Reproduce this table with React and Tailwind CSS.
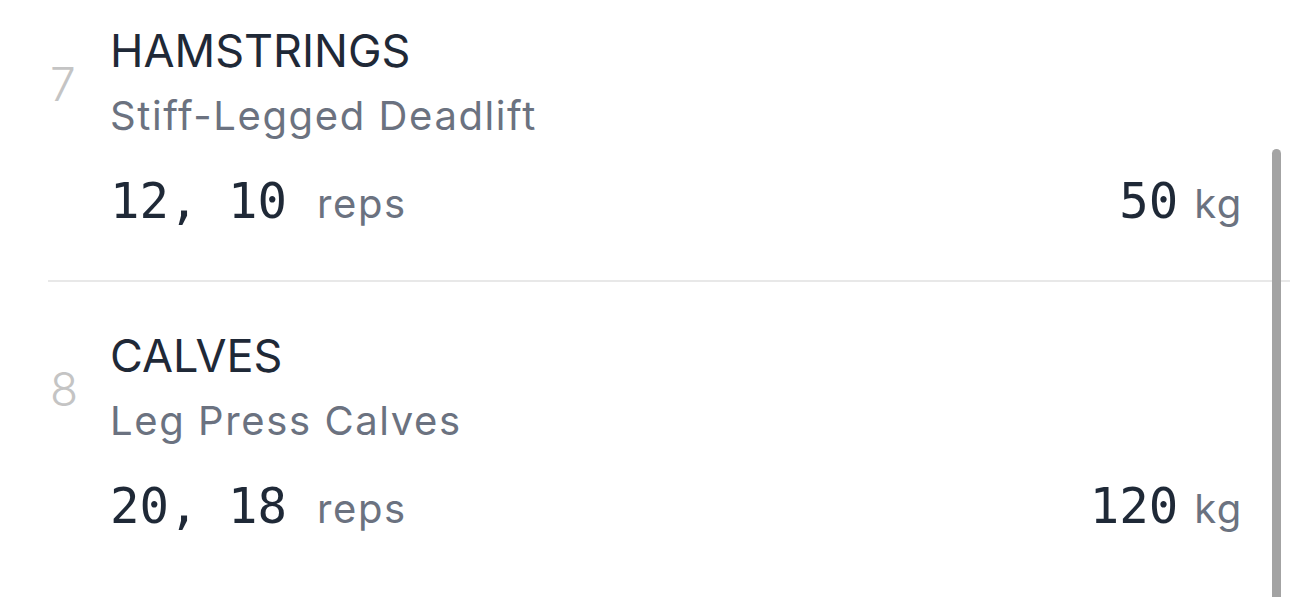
import React from "react";

const sans = { fontFamily: '"Inter", "Noto Sans", sans-serif' };
const mono = { fontFamily: '"DejaVu Sans Mono", monospace' };

function Row({ n, title, sub, reps, kg }) {
  return (
    <div className="pl-[50px] pr-[47px]">
      <div className="flex items-center">
        <div className="w-[60px] text-[46px] leading-none text-[#c4c4c4] font-light" style={sans}>
          {n}
        </div>
        <div>
          <div className="text-[45px] leading-[63px] text-[#1f2937]" style={sans}>
            {title}
          </div>
          <div className="text-[40px] leading-[67px] tracking-[0.04em] text-[#6b7280]" style={sans}>
            {sub}
          </div>
        </div>
      </div>
      <div className="ml-[60px] mt-[16px] flex items-baseline justify-between h-[115px]">
        <div className="flex items-baseline">
          <span className="text-[49px] text-[#1f2937]" style={mono}>
            {reps}
          </span>
          <span className="ml-[30px] text-[40px] tracking-[0.04em] text-[#6b7280]" style={sans}>
            reps
          </span>
        </div>
        <div className="flex items-baseline">
          <span className="text-[49px] text-[#1f2937]" style={mono}>
            {kg}
          </span>
          <span className="ml-[16px] text-[40px] tracking-[0.04em] text-[#6b7280]" style={sans}>
            kg
          </span>
        </div>
      </div>
    </div>
  );
}

export default function App() {
  return (
    <div className="relative h-[597px] w-[1290px] overflow-hidden bg-white">
      <div className="flex flex-col pt-[19px]">
        <Row n="7" title="HAMSTRINGS" sub="Stiff-Legged Deadlift" reps="12, 10" kg="50" />
        <div className="ml-[48px] h-[2px] bg-[#e8e8e8]" />
        <div className="pt-[42px]">
          <Row n="8" title="CALVES" sub="Leg Press Calves" reps="20, 18" kg="120" />
        </div>
      </div>
      <div className="absolute right-[9px] top-[149px] bottom-0 w-[9px] rounded-t-full bg-[#a3a3a3]" />
    </div>
  );
}
